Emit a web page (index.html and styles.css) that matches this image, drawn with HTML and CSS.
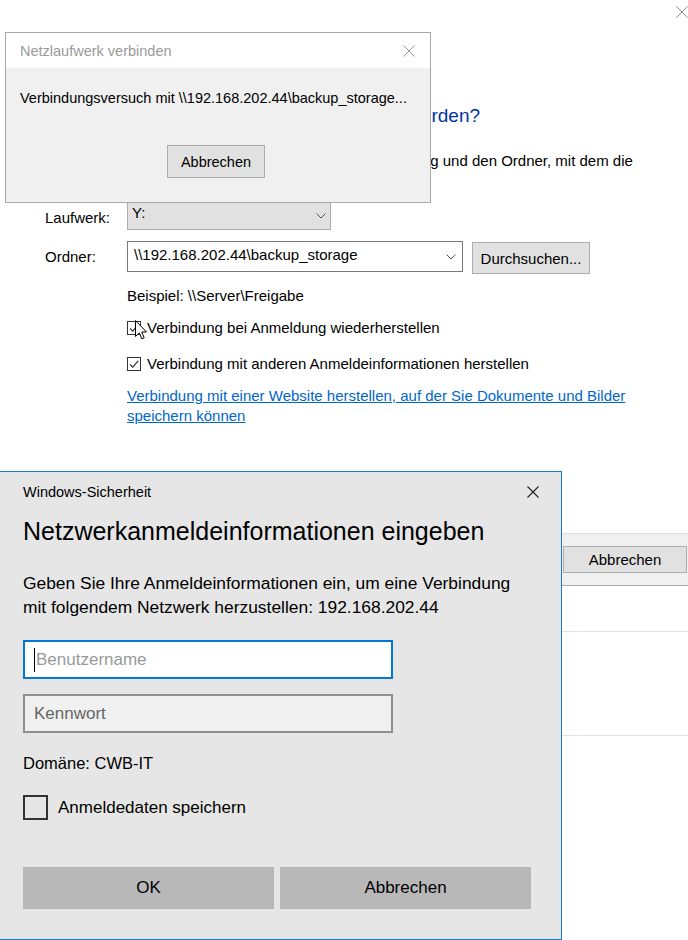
FILE: index.html
```html
<!DOCTYPE html>
<html lang="de">
<head>
    <meta charset="UTF-8">
    <meta name="viewport" content="width=device-width, initial-scale=1.0">
    <title>Netzlaufwerk verbinden</title>
    <link rel="stylesheet" href="styles.css">
</head>
<body>
    <div class="wizard">
        <div class="wizard-top">
            <svg class="wizard-close" width="12" height="12" viewBox="0 0 12 12">
                <path d="M0.5 0.5 L11.5 11.5 M11.5 0.5 L0.5 11.5" stroke="#8a8a8a" stroke-width="1" fill="none"/>
            </svg>
        </div>

        <div class="wizard-body">
            <h1 class="main-instruction">Welcher Netzwerkordner soll zugeordnet werden?</h1>
            <p class="intro">Geben Sie den Laufwerkbuchstaben für die Verbindung und den Ordner, mit dem die<br>Verbindung hergestellt werden soll, an:</p>

            <div class="form-row drive-row">
                <span class="field-label">Laufwerk:</span>
                <div class="select">
                    <span>Y:</span>
                    <svg width="10" height="6" viewBox="0 0 10 6"><path d="M0.5 0.5 L5 5 L9.5 0.5" stroke="#555" fill="none"/></svg>
                </div>
            </div>

            <div class="form-row folder-row">
                <span class="field-label">Ordner:</span>
                <div class="combo">
                    <span>\\192.168.202.44\backup_storage</span>
                    <svg width="10" height="6" viewBox="0 0 10 6"><path d="M0.5 0.5 L5 5 L9.5 0.5" stroke="#555" fill="none"/></svg>
                </div>
                <button class="win-btn browse-btn">Durchsuchen...</button>
            </div>

            <div class="hint">Beispiel: \\Server\Freigabe</div>

            <div class="check-row first-check">
                <span class="small-check">
                    <svg width="12" height="12" viewBox="0 0 12 12"><path d="M2 6.5 L4.8 9.2 L10.2 2.8" stroke="#333" stroke-width="1.2" fill="none"/></svg>
                </span>
                <span>Verbindung bei Anmeldung wiederherstellen</span>
            </div>
            <div class="check-row second-check">
                <span class="small-check">
                    <svg width="12" height="12" viewBox="0 0 12 12"><path d="M2 6.5 L4.8 9.2 L10.2 2.8" stroke="#333" stroke-width="1.2" fill="none"/></svg>
                </span>
                <span>Verbindung mit anderen Anmeldeinformationen herstellen</span>
            </div>

            <a href="#" class="web-link">Verbindung mit einer Website herstellen, auf der Sie Dokumente und Bilder<br>speichern können</a>
        </div>

        <div class="wizard-footer">
            <button class="win-btn footer-btn">Fertig stellen</button>
            <button class="win-btn footer-btn">Abbrechen</button>
        </div>
    </div>

    <div class="back-rows">
        <div class="back-row short"></div>
        <div class="back-row"></div>
    </div>

    <!-- Fortschrittsfenster -->
    <div class="progress-dialog">
        <div class="progress-title">
            <span>Netzlaufwerk verbinden</span>
            <svg width="12" height="12" viewBox="0 0 12 12">
                <path d="M0.5 0.5 L11.5 11.5 M11.5 0.5 L0.5 11.5" stroke="#999" stroke-width="1" fill="none"/>
            </svg>
        </div>
        <div class="progress-body">
            <div class="progress-text">Verbindungsversuch mit \\192.168.202.44\backup_storage...</div>
            <button class="win-btn progress-cancel">Abbrechen</button>
        </div>
    </div>

    <!-- Windows-Sicherheit -->
    <div class="security-dialog">
        <div class="security-title">
            <span>Windows-Sicherheit</span>
            <svg width="12" height="12" viewBox="0 0 12 12">
                <path d="M0.5 0.5 L11.5 11.5 M11.5 0.5 L0.5 11.5" stroke="#222" stroke-width="1.1" fill="none"/>
            </svg>
        </div>
        <h2 class="security-heading">Netzwerkanmeldeinformationen eingeben</h2>
        <p class="security-text">Geben Sie Ihre Anmeldeinformationen ein, um eine Verbindung<br>mit folgendem Netzwerk herzustellen: 192.168.202.44</p>

        <div class="cred-input focused">
            <span class="caret"></span>
            <span class="placeholder">Benutzername</span>
        </div>
        <div class="cred-input">
            <span class="placeholder dark">Kennwort</span>
        </div>

        <div class="domain">Domäne: CWB-IT</div>

        <div class="save-row">
            <span class="big-check"></span>
            <span>Anmeldedaten speichern</span>
        </div>

        <div class="security-buttons">
            <button class="flat-btn">OK</button>
            <button class="flat-btn">Abbrechen</button>
        </div>
    </div>

    <svg class="cursor" width="13" height="20" viewBox="0 0 13 20">
        <path d="M0.5 0.5 L0.5 16.5 L4.3 12.9 L6.8 18.8 L9.2 17.8 L6.7 12 L11.5 12 Z" fill="#fff" stroke="#000" stroke-width="1"/>
    </svg>
</body>
</html>
```

FILE: styles.css
```css
body {
    margin: 0;
    padding: 0;
    width: 688px;
    height: 940px;
    overflow: hidden;
    background-color: #fff;
    font-family: "Liberation Sans", Arial, sans-serif;
    font-size: 15px;
    color: #000;
    position: relative;
}

/* Assistent im Hintergrund */
.wizard-top {
    height: 24px;
    display: flex;
    justify-content: flex-end;
}

.wizard-close {
    margin-top: 6px;
}

.wizard-body {
    padding-left: 45px;
}

.main-instruction {
    margin: 79px 0 0 14px;
    font-size: 19px;
    line-height: 26px;
    font-weight: normal;
    color: #0033a0;
    white-space: nowrap;
}

.intro {
    margin: 22px 0 0 25px;
    line-height: 20px;
    white-space: nowrap;
}

.form-row {
    display: flex;
    align-items: center;
}

.field-label {
    width: 82px;
}

.drive-row {
    margin-top: 10px;
}

.drive-row .field-label {
    margin-top: 4px;
}

.select {
    width: 204px;
    height: 29px;
    box-sizing: border-box;
    background-color: #e1e1e1;
    border: 1px solid #adadad;
    display: flex;
    justify-content: space-between;
    align-items: center;
    padding: 0 4px 0 4px;
}

.select span {
    margin-top: -6px;
}

.folder-row {
    margin-top: 11px;
    align-items: flex-start;
}

.folder-row .field-label {
    margin-top: 7px;
}

.combo {
    width: 336px;
    height: 31px;
    box-sizing: border-box;
    border: 1px solid #7a7a7a;
    display: flex;
    justify-content: space-between;
    align-items: center;
    padding: 0 6px 0 6px;
}

.combo span {
    margin-top: -4px;
}

.win-btn {
    font-family: inherit;
    font-size: 15px;
    color: #000;
    background-color: #e1e1e1;
    border: 1px solid #adadad;
    padding: 0;
}

.browse-btn {
    width: 118px;
    height: 32px;
    margin: 1px 0 0 9px;
}

.hint {
    margin-top: 12px;
    padding-left: 82px;
    line-height: 20px;
}

.check-row {
    display: flex;
    align-items: center;
    padding-left: 82px;
    line-height: 20px;
}

.first-check {
    margin-top: 12px;
}

.second-check {
    margin-top: 16px;
}

.small-check {
    width: 14px;
    height: 14px;
    box-sizing: border-box;
    border: 1px solid #333;
    display: flex;
    align-items: center;
    justify-content: center;
    margin-right: 6px;
}

.web-link {
    display: block;
    margin-top: 12px;
    margin-left: 82px;
    line-height: 20px;
    color: #0066cc;
    white-space: nowrap;
}

.wizard-footer {
    margin-top: 107px;
    height: 51px;
    background-color: #f0f0f0;
    border-top: 1px solid #dfdfdf;
    border-bottom: 1px solid #a9a9a9;
    display: flex;
    align-items: flex-start;
    padding-left: 440px;
    gap: 8px;
}

.footer-btn {
    width: 124px;
    height: 27px;
    margin-top: 12px;
    flex-shrink: 0;
}

.footer-btn:first-child {
    width: 115px;
}

.back-row {
    height: 103px;
    border-bottom: 1px solid #e3e3e3;
}

.back-row.short {
    height: 45px;
}

/* kleines Fortschrittsfenster */
.progress-dialog {
    position: absolute;
    left: 5px;
    top: 32px;
    width: 426px;
    height: 171px;
    box-sizing: border-box;
    border: 1px solid #a9a9a9;
    background-color: #f0f0f0;
    font-size: 14.5px;
}

.progress-title {
    height: 35px;
    background-color: #fff;
    display: flex;
    justify-content: space-between;
    align-items: center;
    padding: 0 15px 0 14px;
    color: #9a9a9a;
}

.progress-body {
    display: flex;
    flex-direction: column;
    align-items: center;
}

.progress-text {
    align-self: flex-start;
    margin: 20px 0 0 14px;
    line-height: 20px;
    white-space: nowrap;
}

.progress-cancel {
    width: 98px;
    height: 33px;
    margin-top: 37px;
    margin-left: -4px;
    font-size: 14.5px;
}

/* Windows-Sicherheit */
.security-dialog {
    position: absolute;
    left: -1px;
    top: 471px;
    width: 563px;
    height: 469px;
    box-sizing: border-box;
    border: 1px solid #1979ca;
    background-color: #e6e6e6;
    padding: 11px 22px 0 23px;
}

.security-title {
    display: flex;
    justify-content: space-between;
    align-items: center;
    height: 18px;
    font-size: 14.5px;
}

.security-heading {
    margin: 15px 0 0 0;
    font-size: 25px;
    line-height: 30px;
    font-weight: normal;
    white-space: nowrap;
}

.security-text {
    margin: 25px 0 0 0;
    font-size: 17.4px;
    line-height: 24px;
    white-space: nowrap;
}

.cred-input {
    width: 370px;
    height: 39px;
    box-sizing: border-box;
    border: 2px solid #8f8f8f;
    background-color: #f0f0f0;
    display: flex;
    align-items: center;
    padding-left: 9px;
    margin-top: 15px;
    font-size: 17px;
}

.cred-input.focused {
    margin-top: 21px;
    border-color: #0078d7;
    background-color: #fff;
}

.caret {
    width: 1px;
    height: 24px;
    background-color: #000;
    margin-right: 1px;
}

.placeholder {
    color: #999;
}

.placeholder.dark {
    color: #666;
}

.domain {
    margin-top: 18px;
    font-size: 16.5px;
    line-height: 24px;
}

.save-row {
    display: flex;
    align-items: center;
    margin-top: 20px;
    font-size: 17px;
}

.big-check {
    width: 25px;
    height: 25px;
    box-sizing: border-box;
    border: 2px solid #333;
    margin-right: 10px;
}

.security-buttons {
    display: flex;
    gap: 6px;
    margin-top: 47px;
}

.flat-btn {
    width: 251px;
    height: 42px;
    border: none;
    background-color: #b8b8b8;
    font-family: inherit;
    font-size: 17px;
    color: #000;
    padding: 0;
}

.cursor {
    position: absolute;
    left: 135px;
    top: 320px;
}
```
